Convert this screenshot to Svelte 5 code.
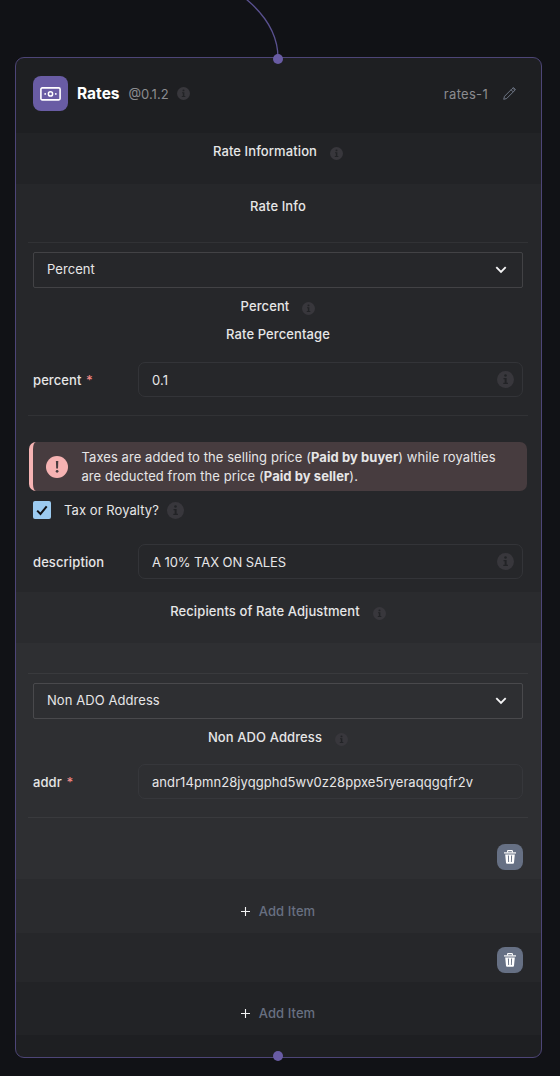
<script>
  let percent = $state('0.1');
  let description = $state('A 10% TAX ON SALES');
  let address = $state('andr14pmn28jyqgphd5wv0z28ppxe5ryeraqqgqfr2v');
</script>

{#snippet info(size)}
  <svg class="info" width={size} height={size} viewBox="0 0 20 20" aria-hidden="true">
    <circle cx="10" cy="10" r="10" fill="#38373c" />
    <circle cx="10" cy="5.2" r="1.5" />
    <path d="M7.7 8.2h3.6v5.5h1.5v1.6H7.4v-1.6h1.6V9.8H7.7z" />
  </svg>
{/snippet}

{#snippet chevron()}
  <svg class="chevron" width="12" height="8" viewBox="0 0 12 8" aria-hidden="true">
    <path d="M1.3 1.2 6 5.9l4.7-4.7" fill="none" stroke="#f4f4f5" stroke-width="1.9" />
  </svg>
{/snippet}

{#snippet trash()}
  <button class="trash" aria-label="Delete">
    <svg width="12" height="14" viewBox="0 0 12 14" aria-hidden="true">
      <path d="M3.6 2.4V1.2Q3.6.6 4.2.6h3.6q.6 0 .6.6v1.2" fill="none" stroke="#fff" stroke-width="1.1" />
      <path d="M0 2.3h12v1.2H0z" fill="#fff" />
      <path fill-rule="evenodd" d="M1.2 4.4h9.6l-.8 8.3q-.1 1-1.1 1H3.1q-1 0-1.1-1zM3.9 5.5l.3 6.6h.9l-.2-6.6zM7.1 5.5l-.2 6.6h.9l.3-6.6z" fill="#fff" />
    </svg>
  </button>
{/snippet}

{#snippet addItem()}
  <button class="add">
    <svg width="9" height="9" viewBox="0 0 9 9" aria-hidden="true"><path d="M4.5 0v9M0 4.5h9" stroke="#f4f4f5" stroke-width="1.1" /></svg>
    <span>Add Item</span>
  </button>
{/snippet}

<main>
  <svg class="edge" width="60" height="60" viewBox="0 0 60 60" aria-hidden="true">
    <path d="M26 -1C44 14 58 34 58 58" fill="none" stroke="#5a5190" stroke-width="1.3" />
  </svg>

  <article class="node">
    <i class="handle top"></i>
    <i class="handle bottom"></i>

    <header>
      <div class="logo">
        <svg width="21" height="14" viewBox="0 0 21 14" aria-hidden="true">
          <rect x=".9" y=".9" width="19.2" height="12" rx="1.3" fill="none" stroke="#fff" stroke-width="1.6" />
          <circle cx="10.5" cy="6.9" r="2.1" fill="none" stroke="#fff" stroke-width="1.5" />
          <circle cx="5.2" cy="6.9" r=".95" fill="#fff" /><circle cx="15.8" cy="6.9" r=".95" fill="#fff" />
        </svg>
      </div>
      <h1>Rates</h1>
      <span class="version">@0.1.2</span>
      {@render info(13)}
      <span class="name">rates-1</span>
      <svg class="pencil" width="13" height="13" viewBox="0 0 13 13" aria-hidden="true">
        <path d="M.7 12.3 1.5 9.3 9 1.8q.8-.8 1.6 0l.6.6q.8.8 0 1.6L3.7 11.5zM8.1 2.8 10.2 4.9M9.6 1.1 10.4.5 12.4 2.6 11.8 3.3" fill="none" stroke="#788091" stroke-width=".9" stroke-linejoin="round" />
      </svg>
    </header>

    <section class="layer outer">
      <div class="title">Rate Information {@render info(13)}</div>
      <section class="layer">
        <div class="subtitle">Rate Info</div>
        <hr />
        <div class="select"><span>Percent</span>{@render chevron()}</div>
        <div class="choice">Percent {@render info(13)}</div>
        <div class="caption">Rate Percentage</div>
        <div class="field">
          <label for="percent">percent <em>*</em></label>
          <div class="input"><input id="percent" bind:value={percent} />{@render info(17)}</div>
        </div>
        <hr />
        <div class="alert">
          <svg width="22" height="22" viewBox="0 0 22 22" aria-hidden="true">
            <circle cx="11" cy="11" r="11" fill="#f6b3b3" />
            <path d="M9.9 5h2.4l-.3 7.6h-1.8z" fill="#473c3f" /><circle cx="11.1" cy="15.3" r="1.35" fill="#473c3f" />
          </svg>
          <p>Taxes are added to the selling price (<b>Paid by buyer</b>) while royalties<br />are deducted from the price (<b>Paid by seller</b>).</p>
        </div>
        <div class="check">
          <span class="box"><svg width="12" height="11" viewBox="0 0 12 11" aria-hidden="true"><path d="M1.2 5.6 4.5 9 10.7 1.3" fill="none" stroke="#111216" stroke-width="2" /></svg></span>
          <span>Tax or Royalty?</span>
          {@render info(17)}
        </div>
        <div class="field second">
          <label for="description">description</label>
          <div class="input"><input id="description" bind:value={description} />{@render info(17)}</div>
        </div>

        <section class="layer recipients">
          <div class="title">Recipients of Rate Adjustment {@render info(13)}</div>
          <section class="layer item">
            <hr />
            <div class="select"><span>Non ADO Address</span>{@render chevron()}</div>
            <div class="choice">Non ADO Address {@render info(13)}</div>
            <div class="field third">
              <label for="addr">addr <em>*</em></label>
              <div class="input"><input id="addr" bind:value={address} /></div>
            </div>
            <hr />
            {@render trash()}
          </section>
          {@render addItem()}
        </section>
        {@render trash()}
      </section>
      {@render addItem()}
    </section>
  </article>
</main>

<style>
  :global(body) { background: #111216; }
  * { box-sizing: border-box; }
  main {
    position: relative;
    height: 1076px;
    padding: 57px 18px 0 15px;
    overflow: hidden;
    background: #111216;
    color: #e6e6e7;
    font: 400 13px/20px Inter, sans-serif;
    letter-spacing: .07px;
  }
  svg { display: block; flex: none; }
  button { border: 0; font: inherit; letter-spacing: inherit; }
  .edge { position: absolute; left: 220px; top: 0; }
  .node {
    position: relative;
    height: 1001px;
    border: 1px solid #4d4577;
    border-radius: 9px;
    background: #1e1f22;
  }
  .handle {
    position: absolute;
    left: 257px;
    width: 10px;
    height: 10px;
    border-radius: 50%;
    background: #695ca4;
  }
  .top { top: -4px; }
  .bottom { bottom: -4px; }
  header { display: flex; align-items: center; height: 75px; padding: 0 25px 4px 17px; }
  .logo {
    display: grid;
    place-items: center;
    width: 35px;
    height: 35px;
    margin-right: 9px;
    border-radius: 8px;
    background: #695ca4;
  }
  h1 { margin: 0 9px 0 0; color: #fff; font-size: 15.5px; font-weight: 700; letter-spacing: 0; }
  .version { margin-right: 8px; color: #8b8c90; letter-spacing: 0; }
  .name { margin-left: auto; color: #8b8c90; letter-spacing: .3px; }
  .pencil { margin-left: 15px; }
  .info { fill: #222326; }
  .layer { display: flow-root; background: rgba(255, 255, 255, .0185); }
  .title, .subtitle, .choice, .caption, label { font-weight: 500; letter-spacing: .1px; }
  .title { display: flex; justify-content: center; height: 51px; padding: 8px 1px 0 0; }
  .recipients > .title { padding-top: 9px; }
  .title .info, .choice .info { margin: 6px 0 0 13px; }
  .subtitle { height: 58px; padding: 12px 1px 0 0; text-align: center; }
  hr { height: 1px; margin: 0 13px 0 12px; border: 0; background: rgba(255, 255, 255, .055); }
  .select {
    display: flex;
    align-items: center;
    justify-content: space-between;
    height: 36px;
    margin: 9px 18px 0 17px;
    padding: 0 15px 0 13px;
    border: 1px solid rgba(255, 255, 255, .13);
    border-radius: 2px;
  }
  .select span { padding-bottom: 2px; }
  .choice { display: flex; justify-content: center; height: 28px; padding: 8px 1px 0 0; }
  .caption { height: 46px; padding: 8px 1px 0 0; text-align: center; }
  .field { display: flex; align-items: center; height: 35px; margin: 0 18px 18px 17px; }
  label { width: 105px; }
  em { margin-left: 1px; color: #ef8885; font-style: normal; }
  .input {
    display: flex;
    flex: 1;
    align-items: center;
    height: 35px;
    padding: 0 8px 0 13px;
    border: 1px solid #333438;
    border-radius: 7px;
  }
  .third .input { border-color: #36373b; }
  input {
    flex: 1;
    min-width: 0;
    padding: 0;
    border: 0;
    outline: 0;
    background: transparent;
    color: inherit;
    font: inherit;
    letter-spacing: inherit;
  }
  #description { letter-spacing: -.08px; }
  .alert {
    display: flex;
    align-items: center;
    height: 49px;
    margin: 26px 14px 0 13px;
    padding-left: 13px;
    border-left: 4px solid #f6b3b3;
    border-radius: 7px;
    background: #473c3f;
  }
  .alert p { margin: 0 0 0 13.5px; line-height: 19px; white-space: nowrap; }
  .check { display: flex; align-items: center; height: 38px; padding-left: 17px; }
  .check .info { margin-left: 8px; }
  .box {
    display: grid;
    place-items: center;
    width: 18px;
    height: 18px;
    margin-right: 13px;
    border-radius: 2px;
    background: #9ccbf1;
  }
  .second { margin-top: 15px; margin-bottom: 13px; }
  .item { padding-top: 30px; }
  .third { margin-top: 17px; }
  .trash {
    display: grid;
    place-items: center;
    width: 26px;
    height: 26px;
    margin: 26px 18px 9px auto;
    padding: 0;
    border-radius: 8px;
    background: #667084;
  }
  .recipients + .trash { margin: 14px 18px 9px auto; }
  .add {
    display: flex;
    align-items: center;
    justify-content: center;
    gap: 9px;
    width: 100%;
    height: 54px;
    padding: 10px 1px 0 0;
    background: transparent;
    color: #687081;
    font-weight: 500;
  }
  .outer > .add { height: 53px; padding-top: 9px; }
</style>
